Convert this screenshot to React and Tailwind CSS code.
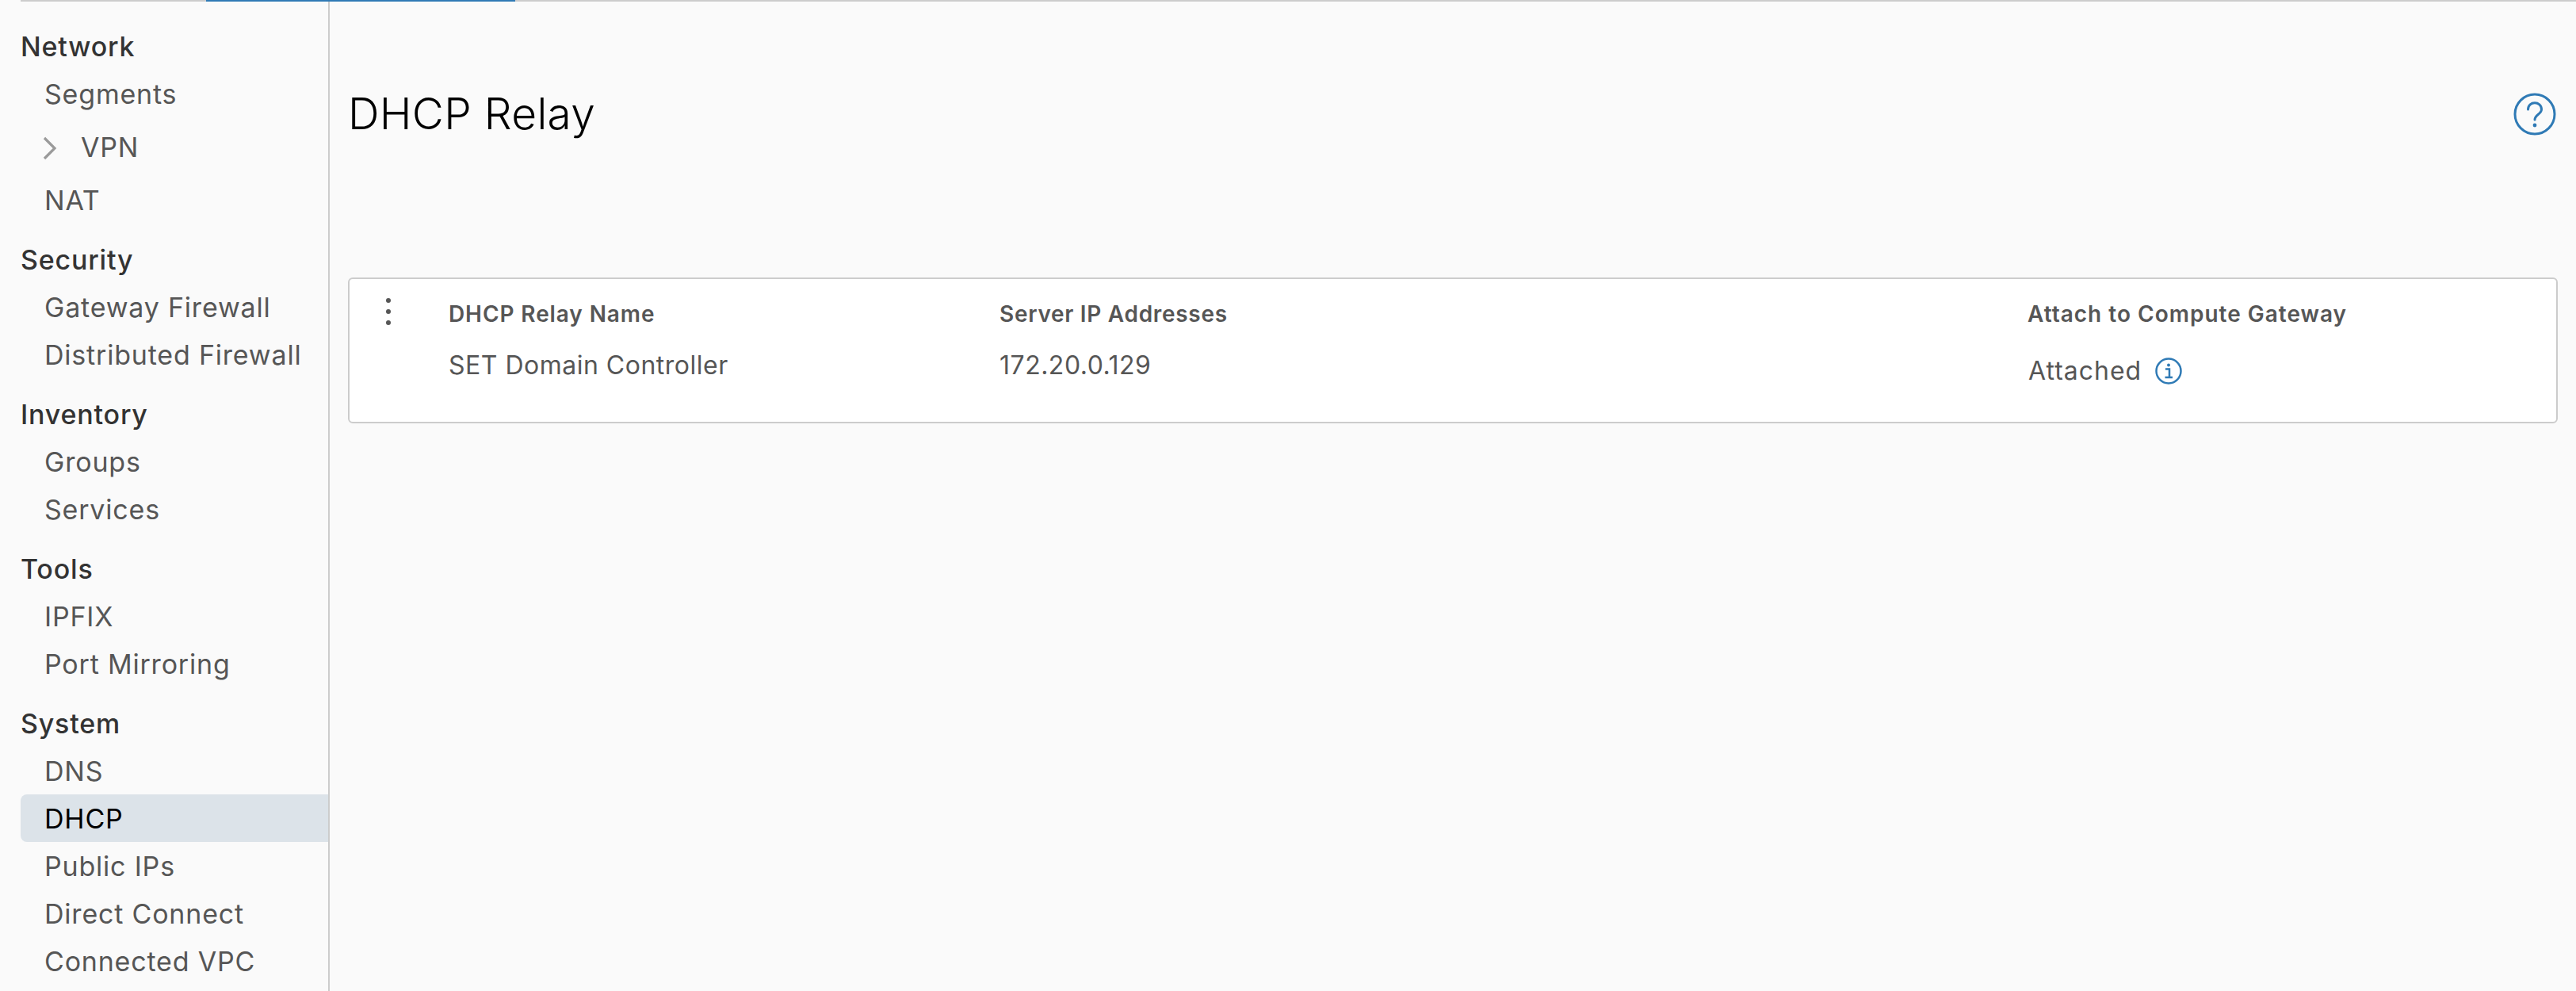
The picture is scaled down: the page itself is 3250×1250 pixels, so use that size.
import React from 'react'

const sections = [
    { title: 'Network', items: ['Segments', 'VPN', 'NAT'] },
    { title: 'Security', items: ['Gateway Firewall', 'Distributed Firewall'] },
    { title: 'Inventory', items: ['Groups', 'Services'] },
    { title: 'Tools', items: ['IPFIX', 'Port Mirroring'] },
    { title: 'System', items: ['DNS', 'DHCP', 'Public IPs', 'Direct Connect', 'Connected VPC'] },
]

const NavItem = ({ label }) => {
    if (label === 'VPN') {
        return (
            <div className="h-[74px] flex items-center pl-[54px] text-[#565656]">
                <svg width="20" height="30" viewBox="0 0 20 30" fill="none" className="mr-[28px] mt-[4px]">
                    <path d="M2 2 L15 15 L2 28" stroke="#9a9a9a" strokeWidth="3.2" />
                </svg>
                <span>{label}</span>
            </div>
        )
    }
    const active = label === 'DHCP'
    return (
        <div className={`h-[60px] flex items-center pl-[30px] ml-[26px] rounded-l-[8px] ${active ? 'bg-[#dce3e9] text-black' : 'text-[#565656]'}`}>
            {label}
        </div>
    )
}

const App = () => {
    return (
        <div className="w-full h-[1250px] overflow-hidden bg-[#fafafa] font-['Inter',sans-serif]">
            <div className="h-[2px] ml-[26px] bg-[#cccccc]">
                <div className="h-full w-[390px] ml-[234px] bg-[#2f7ab5]"></div>
            </div>
            <div className="flex h-[1248px]">
                <aside className="w-[416px] shrink-0 border-r-2 border-[#cccccc] pt-[26px] text-[34px] tracking-[0.8px]">
                    {sections.map(section => (
                        <div key={section.title} className="mb-[15px]">
                            <div className="h-[60px] flex items-center pl-[26px] text-[#333333] font-medium">{section.title}</div>
                            {section.items.map(item => <NavItem key={item} label={item} />)}
                        </div>
                    ))}
                </aside>
                <main className="flex-1 px-[23px]">
                    <div className="h-[348px] pt-[99px] flex items-start justify-between">
                        <h1 className="text-[55px] leading-[84px] font-light tracking-[0.3px] text-black">DHCP Relay</h1>
                        <svg width="54" height="54" viewBox="0 0 54 54" fill="none" className="mt-[16px] mr-[2px]">
                            <circle cx="27" cy="27" r="25" stroke="#2f7ab5" strokeWidth="3" />
                            <path d="M18.5 21 C18.5 10 35.5 10 35.5 21 C35.5 27 27 27.5 27 34" stroke="#2f7ab5" strokeWidth="3" strokeLinecap="round" />
                            <circle cx="27" cy="41" r="2.4" fill="#2f7ab5" />
                        </svg>
                    </div>
                    <div className="h-[184px] bg-white border-2 border-[#cccccc] rounded-[6px] grid grid-cols-[125px_695px_1297px_1fr] grid-rows-[64px_auto] text-[#565656]">
                        <div className="row-span-2 relative">
                            <div className="flex flex-col items-center gap-[8px] pt-[24px] w-[98px]">
                                <span className="w-[6px] h-[6px] rounded-full bg-[#565656]"></span>
                                <span className="w-[6px] h-[6px] rounded-full bg-[#565656]"></span>
                                <span className="w-[6px] h-[6px] rounded-full bg-[#565656]"></span>
                            </div>
                        </div>
                        <div className="pt-[28px] text-[28px] leading-[32px] font-semibold tracking-[0.9px]">DHCP Relay Name</div>
                        <div className="pt-[28px] text-[28px] leading-[32px] font-semibold tracking-[0.7px]">Server IP Addresses</div>
                        <div className="pt-[28px] text-[28px] leading-[32px] font-semibold tracking-[1px]">Attach to Compute Gateway</div>
                        <div className="pt-[25px] text-[32px] leading-[40px] tracking-[0.5px]">SET Domain Controller</div>
                        <div className="pt-[25px] text-[32px] leading-[40px] tracking-[0.5px]">172.20.0.129</div>
                        <div className="pt-[32px] pl-[1px] text-[32px] leading-[40px] tracking-[1px] flex items-start gap-[17px]">
                            <span>Attached</span>
                            <svg width="34" height="34" viewBox="0 0 34 34" fill="none" className="mt-[3px]">
                                <circle cx="17" cy="17" r="15.5" stroke="#2f7ab5" strokeWidth="2.5" />
                                <circle cx="17" cy="9.5" r="2" fill="#2f7ab5" />
                                <path d="M13 14.5 H18 V24.5 M12.5 25 H22" stroke="#2f7ab5" strokeWidth="2.5" />
                            </svg>
                        </div>
                    </div>
                </main>
            </div>
        </div>
    )
}

export default App
